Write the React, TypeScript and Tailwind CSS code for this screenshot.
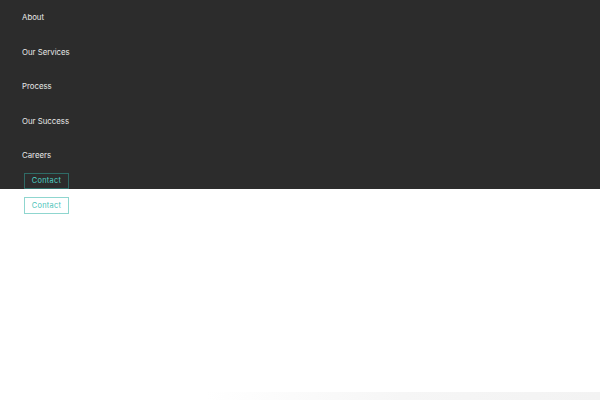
import React from 'react';

const links = ['About', 'Our Services', 'Process', 'Our Success', 'Careers'];

const App: React.FC = () => {
  return (
    <div className="w-[600px] h-[400px] bg-white overflow-hidden font-['Inter','Open_Sans',sans-serif]">
      <nav className="bg-[#2c2c2c] h-[189px] pl-[22px] pt-[1px] flex flex-col">
        {links.map(l => (
          <a key={l} className="h-[34.5px] flex items-center text-[7.8px] text-[#e8e8e8] leading-none">
            {l}
          </a>
        ))}
        <button className="ml-[2px] w-[45px] h-[16px] border border-[#2f6b66] text-[#4fd1c5] text-[7.4px] tracking-[0.3px] leading-none flex items-center justify-center">
          Contact
        </button>
      </nav>
      <div className="pl-[24px] pt-[8px]">
        <button className="w-[45px] h-[17px] border border-[#8fd6cf] text-[#48c3b8] text-[7.4px] tracking-[0.3px] leading-none flex items-center justify-center">
          Contact
        </button>
      </div>
      <div className="mt-[178px] ml-[205px] h-[8px] bg-gradient-to-r from-white via-[#f6f6f6] to-[#f3f3f3]" />
    </div>
  );
};

export default App;
